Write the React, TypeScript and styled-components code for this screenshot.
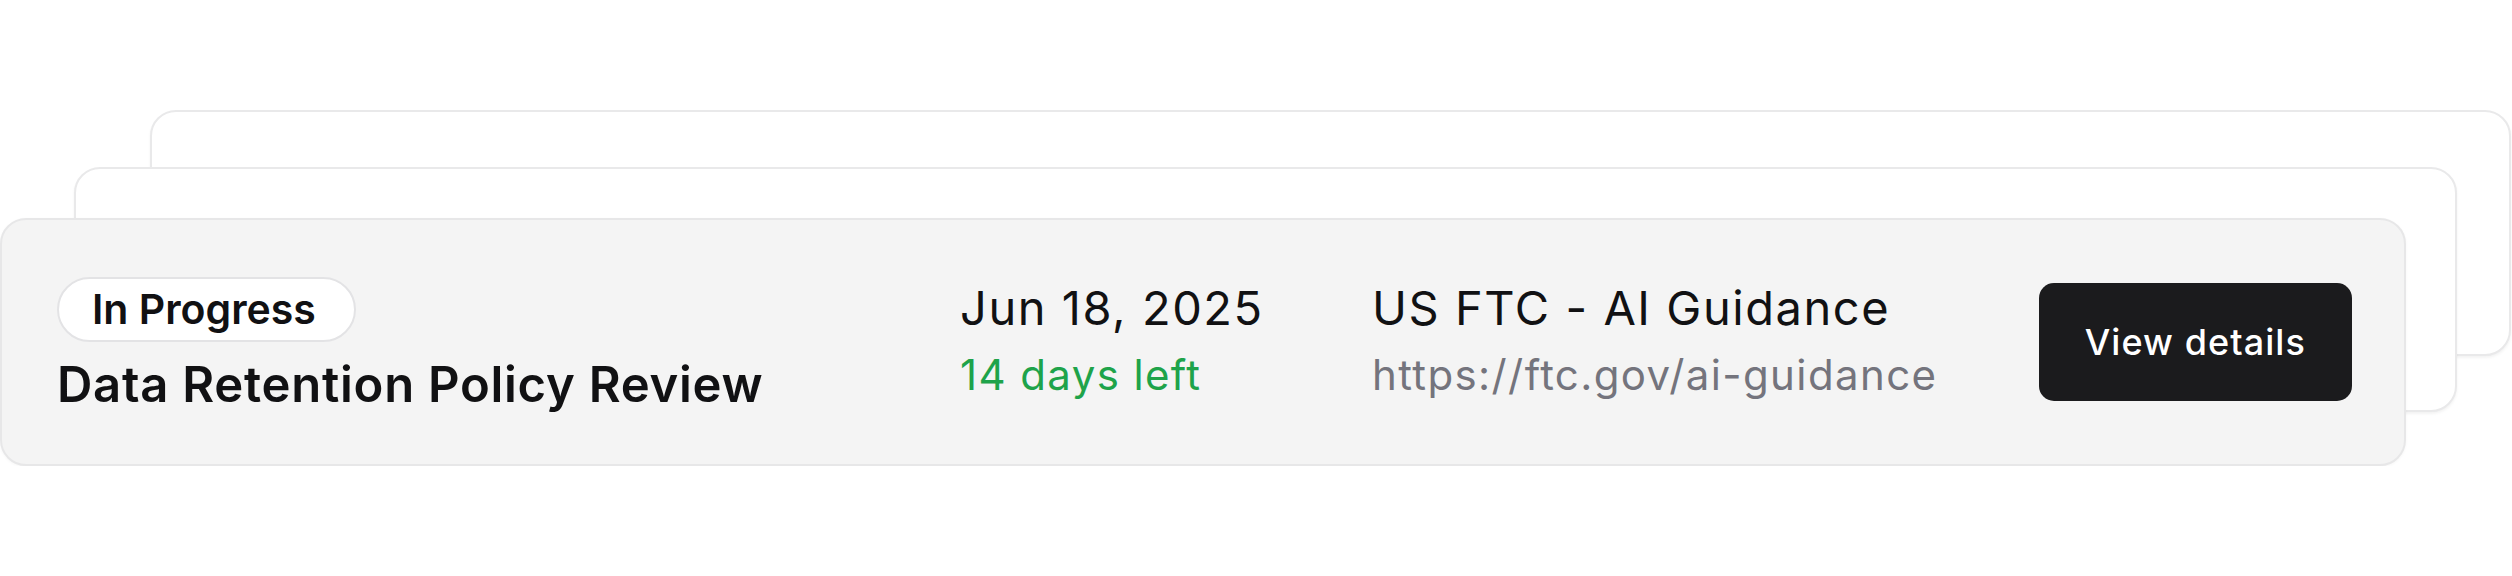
import { FC } from 'react';
import styled, { createGlobalStyle } from 'styled-components';

const GlobalStyle = createGlobalStyle`
  html, body {
    margin: 0;
    padding: 0;
    background: #ffffff;
  }

  body {
    font-family: Inter, 'Noto Sans', 'Liberation Sans', sans-serif;
    color: #111113;
    -webkit-font-smoothing: antialiased;
  }
`;

// offsets for the cards peeking out behind the front one
const layers = [
  { left: 150, right: 1, top: 0, height: 246 },
  { left: 74, right: 55, top: 57, height: 245 },
];

const App: FC = () => {
  return (
    <>
      <GlobalStyle />
      <Page>
        <Stack>
          {layers.map((layer, i) => (
            <BackCard
              key={i}
              $left={layer.left}
              $right={layer.right}
              $top={layer.top}
              $height={layer.height}
            />
          ))}
          <Card>
            <TitleBlock>
              <StatusBadge>In Progress</StatusBadge>
              <Title>Data Retention Policy Review</Title>
            </TitleBlock>
            <InfoBlock>
              <Primary>Jun 18, 2025</Primary>
              <Secondary $tone="green">14 days left</Secondary>
            </InfoBlock>
            <InfoBlock>
              <Primary>US FTC - AI Guidance</Primary>
              <Secondary $tone="gray">https://ftc.gov/ai-guidance</Secondary>
            </InfoBlock>
            <DetailsButton type="button">View details</DetailsButton>
          </Card>
        </Stack>
      </Page>
    </>
  );
};

export default App;

const Page = styled.div`
  width: 2512px;
  padding-top: 110px;
`;

const Stack = styled.div`
  display: grid;
  grid-template-columns: 100%;
  align-items: start;

  & > * {
    grid-area: 1 / 1;
  }
`;

const BackCard = styled.div<{ $left: number; $right: number; $top: number; $height: number }>`
  margin: ${({ $top, $right, $left }) => `${$top}px ${$right}px 0 ${$left}px`};
  height: ${({ $height }) => $height}px;
  box-sizing: border-box;
  background: #ffffff;
  border: 2px solid #e9e9ea;
  border-radius: 26px;
  box-shadow: 0 2px 3px rgba(0, 0, 0, 0.05);
`;

const Card = styled.div`
  margin: 108px 106px 0 0;
  height: 248px;
  box-sizing: border-box;
  padding: 0 52px 0 55px;
  background: #f4f4f4;
  border: 2px solid #e7e7e8;
  border-radius: 26px;
  box-shadow: 0 1px 3px rgba(0, 0, 0, 0.04);
  display: grid;
  grid-template-columns: 903px 412px 1fr auto;
  align-items: center;
`;

const TitleBlock = styled.div`
  display: flex;
  flex-direction: column;
  align-items: flex-start;
  gap: 14px;
  padding-top: 6px;
`;

const StatusBadge = styled.span`
  box-sizing: border-box;
  height: 65px;
  display: inline-flex;
  align-items: center;
  padding: 0 38px 0 33px;
  background: #ffffff;
  border: 2px solid #e3e3e5;
  border-radius: 999px;
  font-size: 41px;
  font-weight: 600;
  color: #111113;
`;

const Title = styled.h2`
  margin: 0;
  font-size: 49px;
  line-height: 58px;
  font-weight: 600;
  letter-spacing: 0.015em;
  color: #111113;
`;

const InfoBlock = styled.div`
  display: flex;
  flex-direction: column;
  gap: 10px;
  padding-bottom: 4px;
`;

const Primary = styled.span`
  font-size: 47px;
  line-height: 60px;
  font-weight: 400;
  letter-spacing: 0.033em;
  color: #111113;
`;

const Secondary = styled.span<{ $tone: 'green' | 'gray' }>`
  font-size: 42px;
  line-height: 54px;
  font-weight: 400;
  letter-spacing: 0.033em;
  color: ${({ $tone }) => ($tone === 'green' ? '#1ea34a' : '#74747d')};
`;

const DetailsButton = styled.button`
  box-sizing: border-box;
  height: 118px;
  padding: 0 46px;
  border: none;
  border-radius: 15px;
  background: #1b1b1d;
  color: #ffffff;
  font-family: inherit;
  font-size: 36px;
  font-weight: 500;
  letter-spacing: 0.03em;
  cursor: pointer;
`;
